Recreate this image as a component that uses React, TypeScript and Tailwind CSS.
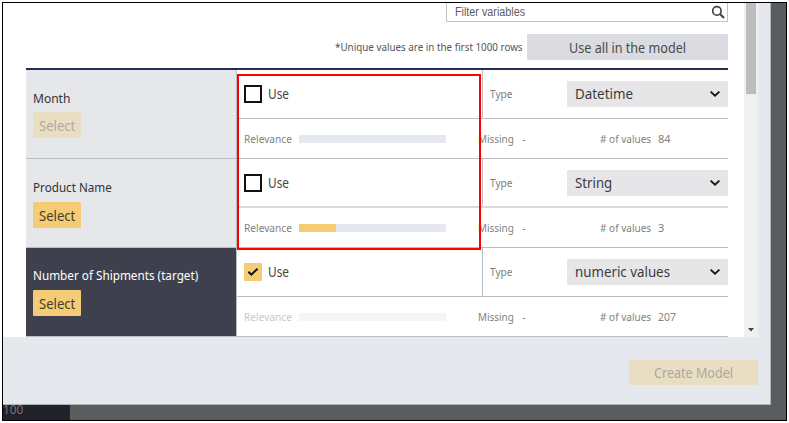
import { useLayoutEffect, useRef, useState } from "react";

// A single line of condensed text that fills the given width.
function Label({ text, width, className = "" }: { text: string; width: number; className?: string }) {
  const ref = useRef<HTMLSpanElement>(null);
  const [scale, setScale] = useState(1);
  useLayoutEffect(() => {
    if (ref.current) setScale(width / ref.current.offsetWidth);
  }, [text, width]);
  return (
    <span className={`flex shrink-0 ${className}`} style={{ width }}>
      <span ref={ref} className="shrink-0 origin-left whitespace-nowrap" style={{ transform: `scaleX(${scale})` }}>
        {text}
      </span>
    </span>
  );
}

function Chevron() {
  return (
    <svg width="12" height="8" viewBox="0 0 12 8" fill="none" stroke="#161616" strokeWidth="1.9">
      <path d="M1.6 1.6 6 5.8l4.4-4.2" />
    </svg>
  );
}

type Row = {
  name: string;
  nameWidth: number;
  type: string;
  typeWidth: number;
  count: string;
  countWidth: number;
  relevance: number;
  disabled?: boolean;
  target?: boolean;
  thick?: boolean;
};

const rows: Row[] = [
  { name: "Month", nameWidth: 37, type: "Datetime", typeWidth: 58, count: "84", countWidth: 13, relevance: 0, disabled: true },
  { name: "Product Name", nameWidth: 79, type: "String", typeWidth: 37, count: "3", countWidth: 6, relevance: 25, thick: true },
  { name: "Number of Shipments (target)", nameWidth: 165, type: "numeric values", typeWidth: 95, count: "207", countWidth: 18, relevance: 0, target: true },
];

function VariableRow({ row }: { row: Row }) {
  return (
    <div className="flex h-[89px]">
      <div
        className={`w-[211px] border-r border-b border-[#b9bdc5] pl-[7px] ${
          row.target ? "bg-[#3f404d] pt-[18px] text-white" : "bg-[#e5e7eb] pt-[19px] text-[#333]"
        }`}
      >
        <Label text={row.name} width={row.nameWidth} className="text-[13px] leading-[18px]" />
        <button
          className={`flex h-[26px] w-12 items-center rounded-[1px] pb-px pl-[6px] ${
            row.disabled ? "mt-[5px] bg-[#eadec2] text-[#aeaaa2]" : "mt-[6px] bg-[#f3cc75] text-[#453c28]"
          }`}
        >
          <Label text="Select" width={36} className="text-[14.5px] leading-5" />
        </button>
      </div>
      <div className="flex flex-1 flex-col border-b border-[#b9bdc5]">
        <div className={`flex h-[49px] ${row.thick ? "border-b-2 border-[#d7dae0]" : "border-b border-[#b9bdc5]"}`}>
          <div className="flex w-[246px] border-r border-[#b9bdc5] pl-[7px]">
            <span
              className={`mt-[15px] flex size-[18px] items-center justify-center ${
                row.target ? "bg-[#f3cc75]" : "border-2 border-[#111] bg-white"
              }`}
            >
              {row.target && (
                <svg width="12" height="10" viewBox="0 0 12 10" fill="none" stroke="#111" strokeWidth="2">
                  <path d="m1.4 4.7 3 3 6.1-6" />
                </svg>
              )}
            </span>
            <Label text="Use" width={21} className="mt-[14px] ml-[6px] text-[13.5px] leading-5 text-[#444]" />
          </div>
          <Label text="Type" width={22} className="mt-4 ml-[7px] text-[11px] leading-4 text-[#7d7d7d]" />
          <div className="mt-[11px] ml-auto flex h-[26px] w-[161px] items-center justify-between bg-[#e6e6e8] pr-[7px] pl-2">
            <Label text={row.type} width={row.typeWidth} className="-mt-[2px] text-[15px] leading-5 text-[#3b3b3b]" />
            <Chevron />
          </div>
        </div>
        <div className="flex flex-1 items-center pl-[7px] text-[11px] leading-4 text-[#818181]">
          <Label text="Relevance" width={48} className={row.target ? "text-[#c8c8c8]" : ""} />
          <div className={`ml-[7px] h-2 w-[147px] ${row.target ? "bg-[#f4f5f6]" : "bg-[#e5e8ec]"}`}>
            <div className="h-full bg-[#f3cc75]" style={{ width: `${row.relevance}%` }} />
          </div>
          <Label text="Missing" width={36} className="ml-8" />
          <Label text="-" width={4} className="ml-2" />
          <Label text="# of values" width={51} className="ml-[74px]" />
          <Label text={row.count} width={row.countWidth} className="ml-[7px]" />
        </div>
      </div>
    </div>
  );
}

export default function App() {
  return (
    <div className="h-[423px] w-[789px] overflow-hidden bg-white pt-[2px] pl-[2px] font-['Noto_Sans',sans-serif]">
      <div className="relative h-[419px] w-[785px] overflow-hidden border border-black bg-[#5b5c5e]">
        <div className="flex h-[402px] w-[768px] flex-col border-r border-b border-[#aeb3b8] bg-[#e5e8ed]">
          <div className="flex h-[334px]">
            <main className="w-[741px] bg-white pr-4 pl-[23px]">
              <div className="flex h-[19px] justify-end">
                <div className="flex w-[282px] items-center justify-between border border-t-0 border-[#c3c3c3] pr-[2px] pl-2">
                  <Label
                    text="Filter variables"
                    width={70}
                    className="font-['Liberation_Sans',sans-serif] text-[12px] leading-4 text-[#606060]"
                  />
                  <svg width="14" height="14" viewBox="0 0 14 14" fill="none" stroke="#444">
                    <circle cx="5.9" cy="5.9" r="4.2" strokeWidth="1.7" />
                    <path d="m9 9 4 4" strokeWidth="2.2" />
                  </svg>
                </div>
              </div>
              <div className="mt-3 flex h-[26px] items-center justify-end">
                <Label text="*Unique values are in the first 1000 rows" width={188} className="text-[11.5px] leading-4 text-[#555]" />
                <button className="ml-1 flex h-[26px] w-[201px] items-center rounded-[1px] bg-[#dadce1] pt-px pl-[42px]">
                  <Label text="Use all in the model" width={117} className="text-[14px] leading-5 text-[#4a4a4a]" />
                </button>
              </div>
              <div className="mt-2 border-t-2 border-[#282f4e]">
                {rows.map((row) => (
                  <VariableRow key={row.name} row={row} />
                ))}
              </div>
            </main>
            <div className="flex w-[14px] flex-col items-center justify-between bg-[#f0f0f0]">
              <div className="h-[91px] w-[10px] bg-[#bdbdbd]" />
              <svg className="mb-[5px]" width="6" height="4" viewBox="0 0 6 4" fill="#444">
                <path d="M0 0h6L3 3.5z" />
              </svg>
            </div>
          </div>
          <div className="flex justify-end pt-[23px] pr-3">
            <button className="flex h-[25px] w-[129px] items-center rounded-[1px] bg-[#eadec2] pl-[25px]">
              <Label text="Create Model" width={79} className="text-[14px] leading-5 text-[#aaa7a1]" />
            </button>
          </div>
        </div>
        <div className="h-[15px] w-[67px] bg-[#20212a]">
          <Label text="100" width={20} className="-translate-y-0.5 text-[13px] leading-[13px] text-[#75767b]" />
        </div>
        {/* Highlight over the Use and Relevance columns */}
        <div className="absolute top-[71px] left-[234px] h-[176px] w-[244px] border-2 border-[#ff0000]" />
      </div>
    </div>
  );
}
